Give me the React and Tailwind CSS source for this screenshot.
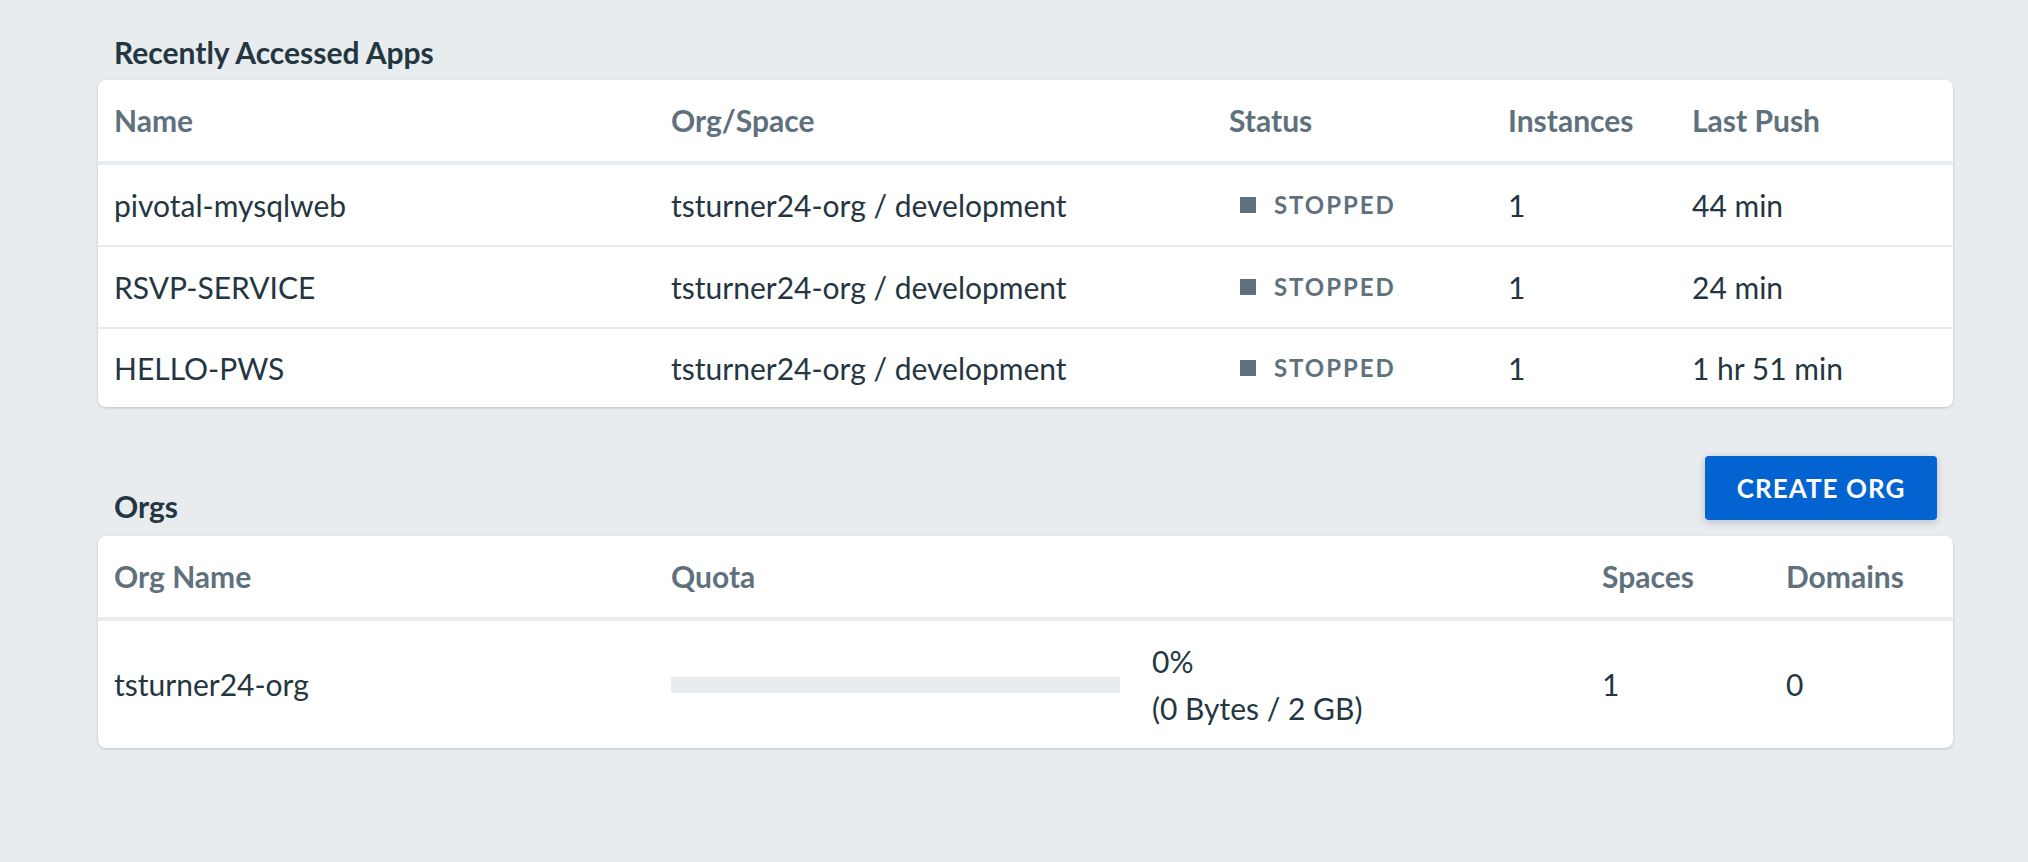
const apps = [
  { name: 'pivotal-mysqlweb', space: 'tsturner24-org / development', instances: 1, lastPush: '44 min' },
  { name: 'RSVP-SERVICE', space: 'tsturner24-org / development', instances: 1, lastPush: '24 min' },
  { name: 'HELLO-PWS', space: 'tsturner24-org / development', instances: 1, lastPush: '1 hr 51 min' },
];

const appCols = 'grid grid-cols-[557px_558px_279px_184px_1fr] items-center px-4';
const orgCols = 'grid grid-cols-[557px_931px_184px_1fr] items-center px-4';

const Status = () => (
  <div className="flex items-center pl-[11px]">
    <span className="w-4 h-4 bg-[#5f717c]" />
    <span className="ml-[18px] text-[24px] font-bold tracking-[0.08em] text-[#5f717c]">STOPPED</span>
  </div>
);

const App = () => {
  return (
    <div className="min-h-screen bg-[#e8ecef] pt-[32px] font-['Lato',sans-serif] text-[#243641]">
      <div className="ml-[98px] w-[1855px]">
        <h2 className="px-4 text-[30px] leading-[40px] font-bold">Recently Accessed Apps</h2>

        <div className="mt-2 bg-white rounded-lg shadow-[0_1px_3px_rgba(0,0,0,0.18)] overflow-hidden text-[30px]">
          <div className={`${appCols} h-[85px] border-b-4 border-[#e8ecef] font-bold text-[#5f717c]`}>
            <div>Name</div>
            <div>Org/Space</div>
            <div>Status</div>
            <div>Instances</div>
            <div>Last Push</div>
          </div>
          {apps.map((app, i) => (
            <div
              key={app.name}
              className={`${appCols} ${i < apps.length - 1 ? 'h-[82px] border-b-2 border-[#e8ecef]' : 'h-[78px]'}`}
            >
              <div>{app.name}</div>
              <div>{app.space}</div>
              <Status />
              <div>{app.instances}</div>
              <div>{app.lastPush}</div>
            </div>
          ))}
        </div>

        <div className="mt-[49px] flex items-end justify-between">
          <h2 className="px-4 -mb-[6px] text-[30px] leading-[40px] font-bold">Orgs</h2>
          <button className="mr-4 w-[232px] h-[64px] rounded bg-[#0263d1] text-white text-[26px] font-bold tracking-[0.04em] shadow-[0_2px_8px_rgba(0,0,0,0.2)]">
            CREATE ORG
          </button>
        </div>

        <div className="mt-[16px] bg-white rounded-lg shadow-[0_1px_3px_rgba(0,0,0,0.18)] overflow-hidden text-[30px]">
          <div className={`${orgCols} h-[85px] border-b-4 border-[#e8ecef] font-bold text-[#5f717c]`}>
            <div>Org Name</div>
            <div>Quota</div>
            <div>Spaces</div>
            <div>Domains</div>
          </div>
          <div className={`${orgCols} h-[127px]`}>
            <div>tsturner24-org</div>
            <div className="flex items-center">
              <div className="w-[449px] h-4 bg-[#e8ecef]" />
              <div className="ml-[32px] leading-[47px]">
                <div>0%</div>
                <div>(0 Bytes / 2 GB)</div>
              </div>
            </div>
            <div>1</div>
            <div>0</div>
          </div>
        </div>
      </div>
    </div>
  );
};

export default App;
